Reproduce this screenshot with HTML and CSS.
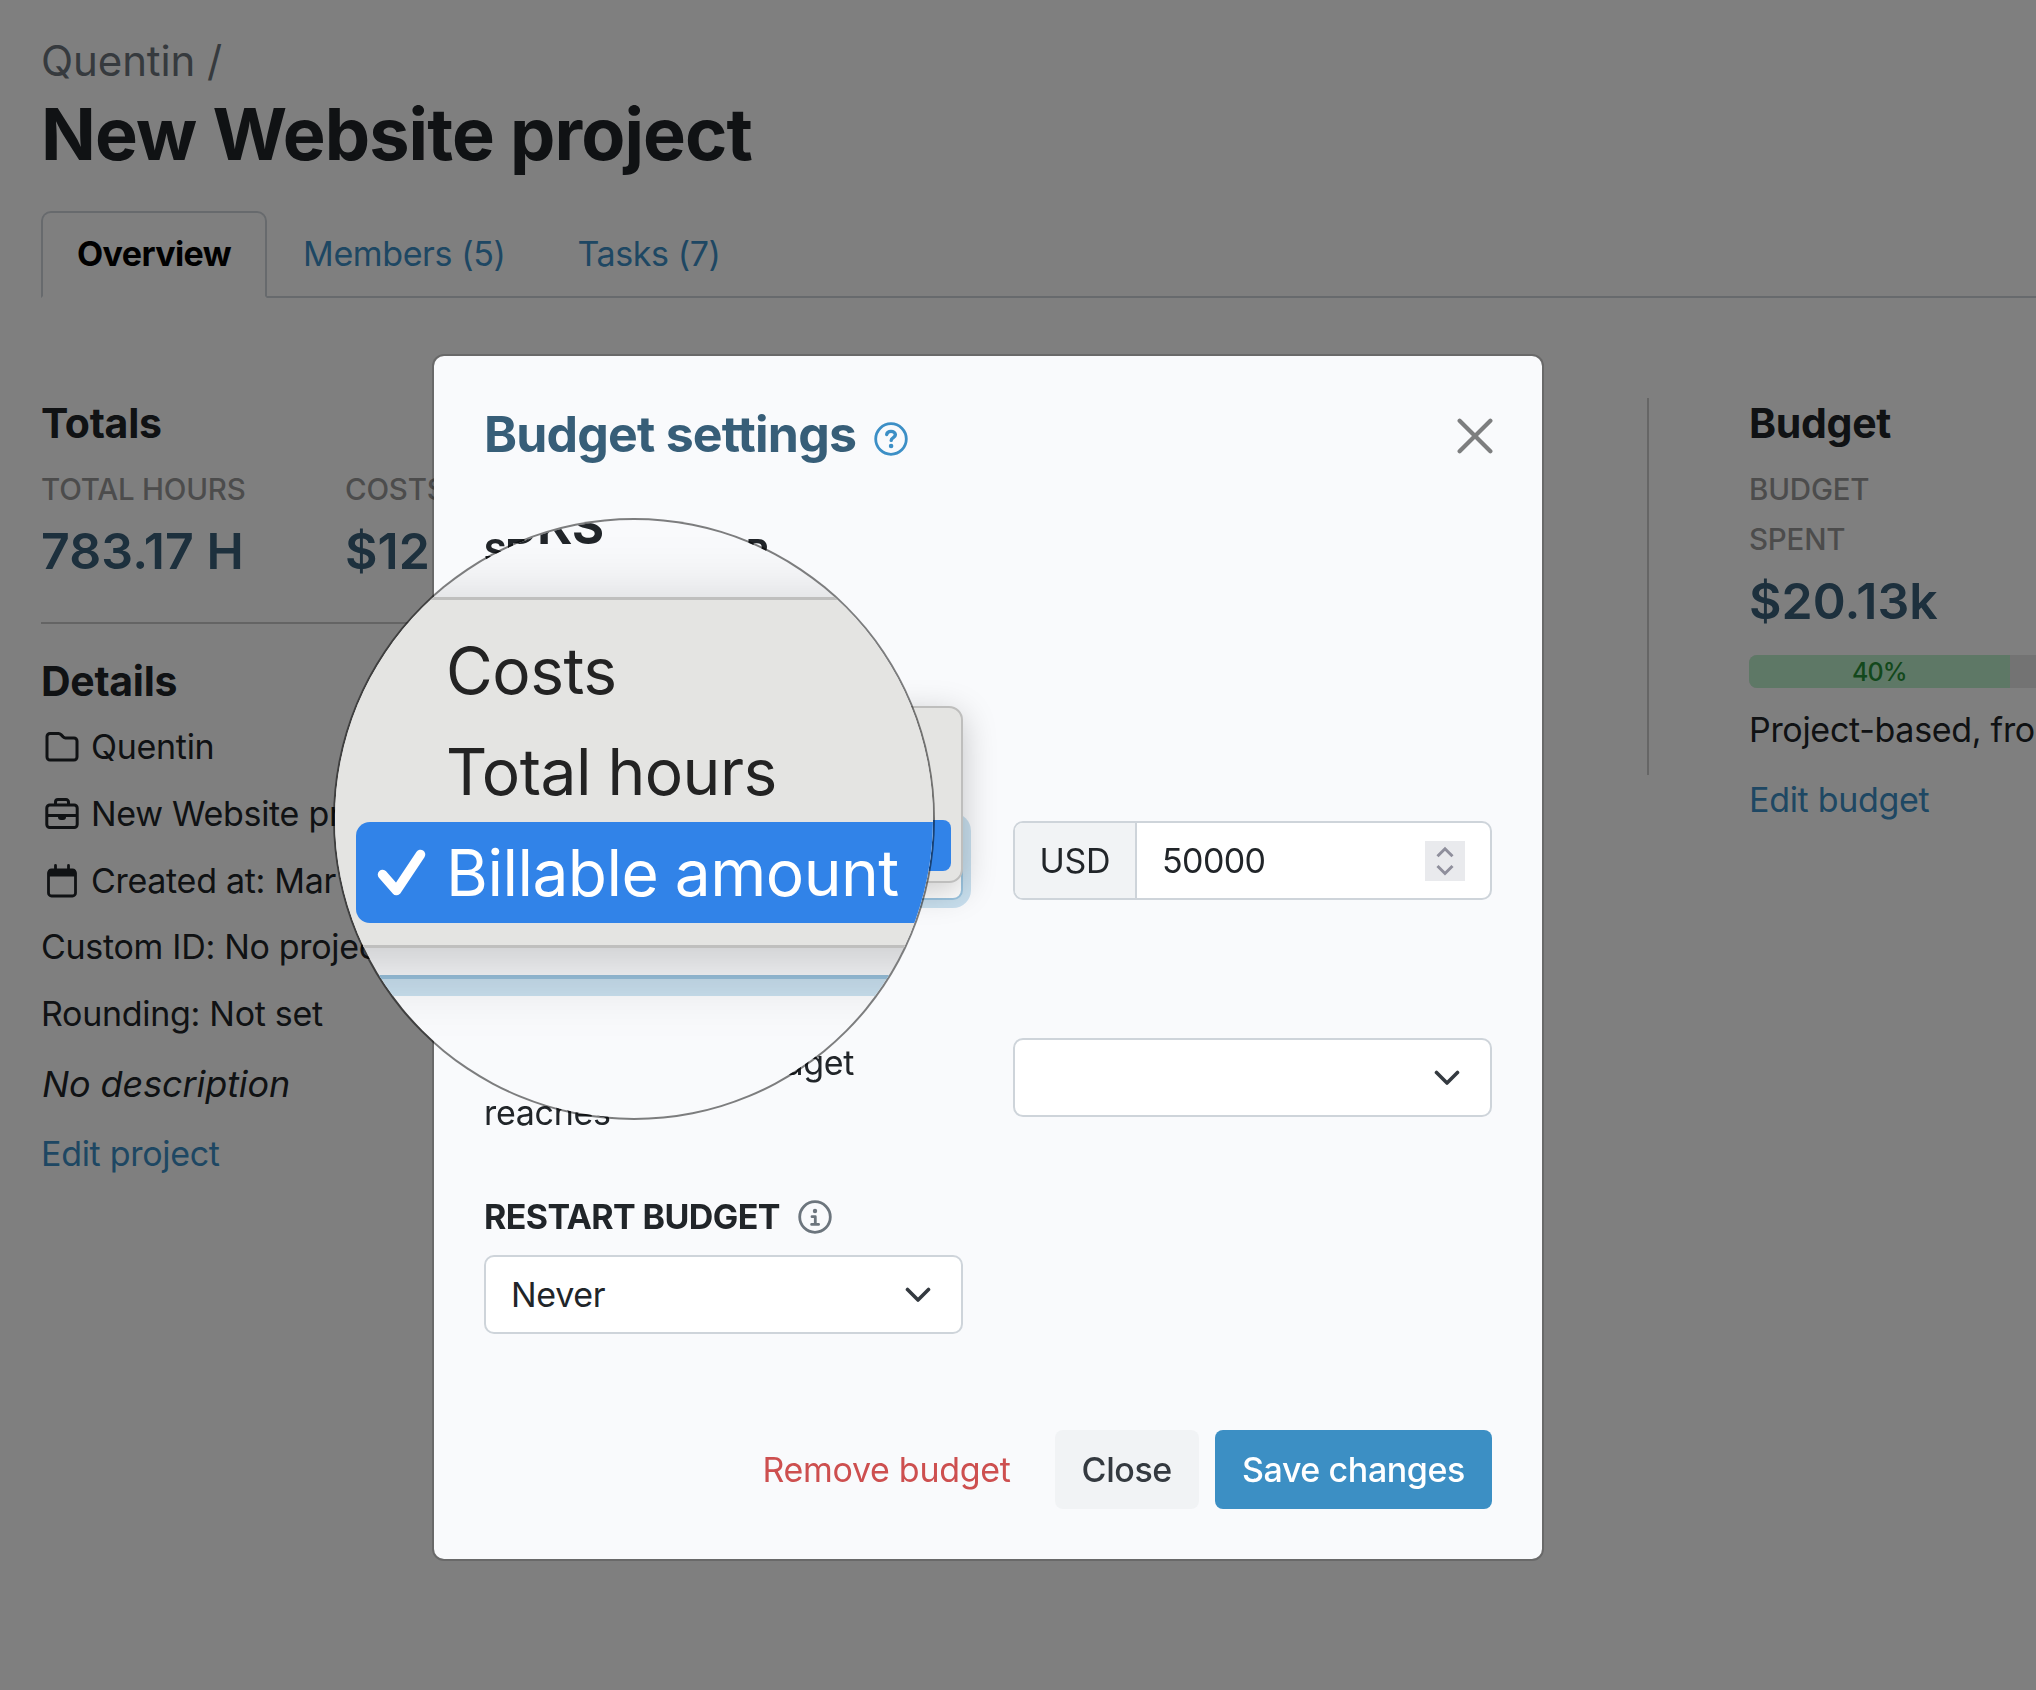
FILE: index.html
```html
<!DOCTYPE html>
<html lang="en">
<head>
  <meta charset="UTF-8" />
  <meta name="viewport" content="width=device-width, initial-scale=1.0" />
  <title>New Website project</title>
  <link rel="stylesheet" href="styles.css">
</head>
<body>
<div class="page">
  <header class="page-header">
    <div class="breadcrumb">Quentin /</div>
    <h1>New Website project</h1>
  </header>

  <nav class="tabs">
    <a class="tab active">Overview</a>
    <a class="tab">Members (5)</a>
    <a class="tab">Tasks (7)</a>
  </nav>

  <main class="summary">
    <section class="project">
      <h2>Totals</h2>
      <div class="totals">
        <div class="total">
          <div class="label">Total hours</div>
          <div class="value">783.17 H</div>
        </div>
        <div class="total">
          <div class="label">Costs</div>
          <div class="value">$12</div>
        </div>
      </div>
      <hr>
      <h2>Details</h2>
      <ul class="details">
        <li>
          <svg class="icon" viewBox="0 0 34 34" fill="none" stroke="currentColor" stroke-width="3" stroke-linejoin="round"><path d="M2 6.500a3 3 0 0 1 3-3h8.500c1 0 1.800.4 2.500 1.100l2.200 2.300c.6.600 1.300 1 2.200 1H29a3 3 0 0 1 3 3V27a3 3 0 0 1-3 3H5a3 3 0 0 1-3-3z"/></svg>
          <span>Quentin</span>
        </li>
        <li>
          <svg class="icon" viewBox="0 0 34 34" fill="none" stroke="currentColor" stroke-width="3"><rect x="1.800" y="8" width="30.400" height="22.500" rx="3"/><path d="M10.500 8V5a2.500 2.500 0 0 1 2.500-2.500h8A2.500 2.500 0 0 1 23.500 5v3M2 18.500h30"/><path d="M13 18h8v2a3 3 0 0 1-3 3h-2a3 3 0 0 1-3-3z" fill="currentColor" stroke="none"/></svg>
          <span>New Website project</span>
        </li>
        <li>
          <svg class="icon" viewBox="0 0 34 34" fill="none" stroke="currentColor" stroke-width="2.800"><rect x="3.500" y="6" width="27" height="26" rx="3"/><path d="M10.500 1.500v6M23.500 1.500v6" stroke-linecap="round"/><path d="M3 12.500V8a3 3 0 0 1 3-3h22a3 3 0 0 1 3 3v4.500z" fill="currentColor" stroke="none"/></svg>
          <span>Created at: Mar 4</span>
        </li>
        <li>Custom ID: No project ID</li>
        <li>Rounding: Not set</li>
        <li class="description">No description</li>
        <li><a>Edit project</a></li>
      </ul>
    </section>

    <section class="chart"></section>

    <section class="budget">
      <h2>Budget</h2>
      <div class="label">Budget</div>
      <div class="label">Spent</div>
      <div class="value">$20.13k</div>
      <div class="progress"><div class="progress-bar" style="width: 40%">40%</div></div>
      <p>Project-based, from Mar 4</p>
      <a>Edit budget</a>
    </section>
  </main>
</div>

<div class="overlay">
  <div class="modal">
    <div class="modal-header">
      <h3>Budget settings</h3>
      <svg class="help" viewBox="0 0 34 34" fill="none" stroke="currentColor" stroke-width="2.800" stroke-linecap="round"><circle cx="17" cy="17" r="15.300"/><path d="M12.700 12.600c.3-2 2-3.200 4.300-3.200 2.500 0 4.400 1.300 4.400 3.400 0 2.900-4.200 2.700-4.200 5.600" stroke-width="3.400"/><circle cx="17.100" cy="24" r="2.300" fill="currentColor" stroke="none"/></svg>
      <svg class="close" viewBox="0 0 34 34" fill="none" stroke="currentColor" stroke-width="4" stroke-linecap="round"><path d="M2.500 2.500l29 29M31.500 2.500l-29 29"/></svg>
    </div>

    <div class="set-for">SET BUDGET FOR</div>

    <div class="row">
      <div class="select focused">
        <div class="menu">
          <div class="option"></div>
          <div class="option"></div>
          <div class="option selected"></div>
        </div>
      </div>
      <div class="input-group">
        <div class="prefix">USD</div>
        <div class="number">
          <span>50000</span>
          <svg class="spinner" viewBox="0 0 40 40" fill="none" stroke="currentColor" stroke-width="3"><path d="M12.500 15.300l7.500-7.500 7.500 7.500M12.500 25l7.500 7.500 7.500-7.500"/></svg>
        </div>
      </div>
    </div>

    <div class="row alert-row">
      <p>Send alert when budget reaches</p>
      <div class="select">
        <svg class="chevron" viewBox="0 0 26 16" fill="none" stroke="currentColor" stroke-width="3.600" stroke-linecap="round" stroke-linejoin="round"><path d="M2.500 2.500L13 13 23.500 2.500"/></svg>
      </div>
    </div>

    <div class="restart">
      <span>RESTART BUDGET</span>
      <svg class="info" viewBox="0 0 34 34" fill="none" stroke="currentColor" stroke-width="2.800" stroke-linecap="round" stroke-linejoin="round"><circle cx="17" cy="17" r="15.300"/><circle cx="17" cy="11" r="2.200" fill="currentColor" stroke="none"/><path d="M14 16.700h3.300v7.500M13.600 24.400h7"/></svg>
    </div>
    <div class="row">
      <div class="select">
        <span>Never</span>
        <svg class="chevron" viewBox="0 0 26 16" fill="none" stroke="currentColor" stroke-width="3.600" stroke-linecap="round" stroke-linejoin="round"><path d="M2.500 2.500L13 13 23.500 2.500"/></svg>
      </div>
    </div>

    <div class="modal-footer">
      <a class="remove">Remove budget</a>
      <button class="btn btn-light">Close</button>
      <button class="btn btn-primary">Save changes</button>
    </div>

    <div class="lens">
      <div class="lens-label">TRACKS</div>
      <div class="lens-menu">
        <div class="lens-option">Costs</div>
        <div class="lens-option">Total hours</div>
        <div class="lens-option selected">
          <svg class="check" viewBox="0 0 50 50" fill="none" stroke="currentColor" stroke-width="9.500" stroke-linecap="round" stroke-linejoin="round"><path d="M5.500 26.500L19.500 42.500 43.500 6.500"/></svg>
          Billable amount
        </div>
      </div>
      <div class="lens-field"></div>
    </div>
  </div>
</div>
</body>
</html>
```
FILE: styles.css
```css
* {
  box-sizing: border-box;
}
html, body {
  margin: 0; padding: 0;
  height: 1690px;
  overflow: hidden;
  font-family: Inter, "Liberation Sans", sans-serif;
  font-size: 34px;
  line-height: 50px;
  letter-spacing: -0.3px;
  background: #fff;
  color: #212529;
}
h1, h2, h3, p, ul {
  margin: 0;
  padding: 0;
}
a {
  color: #3c8fc6;
}
.page {
  padding: 36px 0 0 41px;
  overflow: hidden;
}
.breadcrumb {
  font-size: 42px;
  letter-spacing: -0.1px;
  color: #6c757d;
}
h1 {
  margin-top: 5px;
  font-size: 72px;
  line-height: 86px;
  font-weight: 650;
  letter-spacing: -0.9px;
}
.tabs {
  display: flex;
  height: 87px;
  margin-top: 34px;
  border-bottom: 2px solid #ced4da;
}
.tab {
  height: 87px;
  padding: 16px 34px;
  border: 2px solid transparent;
  border-radius: 10px 10px 0 0;
  letter-spacing: -0.4px;
}
.tab.active {
  color: #000;
  font-weight: 700;
  letter-spacing: -0.6px;
  background: #fff;
  border-color: #ced4da #ced4da #fff;
}
.summary {
  display: flex;
  align-items: flex-start;
  margin-top: 100px;
}
.project {
  flex: none;
  width: 560px;
}
h2 {
  font-size: 41px;
  line-height: 50px;
  font-weight: 650;
}
.totals {
  display: flex;
  margin-top: 16px;
}
.total {
  flex: none;
  width: 304px;
}
.label {
  font-size: 29.5px;
  font-weight: 500;
  letter-spacing: -0.2px;
  text-transform: uppercase;
  color: #999;
}
.value {
  font-size: 50px;
  line-height: 74px;
  font-weight: 600;
  letter-spacing: 0.1px;
  color: #3a607a;
}
hr {
  height: 2px;
  margin: 34px 0 32px;
  border: 0;
  background: #c8c8c8;
}
.details {
  margin-top: 8px;
  list-style: none;
}
.details li {
  display: flex;
  align-items: center;
  gap: 13px;
  height: 66.7px;
  white-space: nowrap;
}
.details .description {
  height: 73px;
  padding-left: 1px;
  font-size: 36px;
  font-style: italic;
  letter-spacing: -0.1px;
}
.icon {
  width: 34px;
  height: 34px;
  margin-left: 4px;
  margin-right: -1px;
}
.chart {
  flex: none;
  width: 1048px;
  height: 377px;
  border-right: 2px solid #ccc;
}
.budget {
  flex: none;
  width: 652px;
  margin-left: 100px;
}
.budget .label:first-of-type {
  margin-top: 16px;
}
.progress {
  height: 33px;
  margin: 17px 0;
  border-radius: 8px;
  overflow: hidden;
  background: #e6e6e6;
}
.progress-bar {
  height: 33px;
  line-height: 34px;
  font-size: 25px;
  font-weight: 500;
  letter-spacing: -0.8px;
  text-align: center;
  background: #bdf0cd;
  color: #269038;
}
.budget p {
  margin-bottom: 20px;
}

.overlay {
  position: fixed;
  top: 0; left: 0; right: 0; bottom: 0;
  display: flex;
  justify-content: center;
  align-items: flex-start;
  padding: 354px 60px 0 0;
  background: rgba(0, 0, 0, 0.5);
}
.modal {
  position: relative;
  display: flex;
  flex-direction: column;
  width: 1112px;
  height: 1207px;
  padding: 48px 50px 50px;
  border: 2px solid rgba(0, 0, 0, 0.175);
  border-radius: 12px;
  background: #f9fafc;
  background-clip: padding-box;
}
.modal-header {
  display: flex;
  align-items: center;
  height: 60px;
}
h3 {
  font-size: 50px;
  line-height: 60px;
  font-weight: 650;
  letter-spacing: -0.8px;
  color: #375e78;
}
.help {
  width: 34px;
  height: 34px;
  margin: 9px 0 0 18px;
  color: #3c8fc6;
}
.close {
  width: 36px;
  height: 36px;
  margin-left: auto;
  margin-right: -1px;
  margin-top: 3px;
  color: #7d7e7f;
}
.set-for {
  margin: 63px 0 244px;
  font-weight: 650;
  letter-spacing: -0.5px;
}
.row {
  display: grid;
  grid-template-columns: 1fr 1fr;
  gap: 50px;
}
.alert-row {
  margin: 138px 0 54px;
  word-spacing: -2.5px;
}
.select, .input-group {
  height: 79px;
  border: 2px solid #ced4da;
  border-radius: 10px;
  background: #fff;
}
.select {
  display: flex;
  align-items: center;
  padding: 0 30px 0 25px;
}
.select.focused {
  position: relative;
  border-color: #9cc5e0;
  box-shadow: 0 0 0 8px #c8dfee;
}
.chevron {
  width: 26px;
  height: 16px;
  margin-left: auto;
  color: #343a40;
}
.menu {
  position: absolute;
  right: -2px;
  bottom: 15px;
  width: 530px;
  height: 177px;
  padding: 10px;
  border: 2px solid #bebebd;
  border-radius: 14px;
  background: #e4e4e2;
  box-shadow: 0 8px 34px rgba(0, 0, 0, 0.22);
}
.option {
  height: 51px;
  border-radius: 8px;
}
.option.selected {
  background: #3183e8;
}
.input-group {
  display: flex;
  overflow: hidden;
}
.prefix {
  width: 122px;
  border-right: 2px solid #ced4da;
  line-height: 75px;
  text-align: center;
  background: #f1f3f5;
}
.number {
  flex: 1;
  display: flex;
  align-items: center;
  justify-content: space-between;
  padding: 0 25px;
  letter-spacing: -0.6px;
}
.spinner {
  width: 40px;
  height: 40px;
  background: #e9eaed;
  color: #8f8f9c;
}
.restart {
  display: flex;
  align-items: center;
  gap: 18px;
  margin-bottom: 13px;
  font-weight: 650;
  letter-spacing: -0.6px;
}
.info {
  width: 34px;
  height: 34px;
  color: #6c757d;
}
.modal-footer {
  display: flex;
  align-items: center;
  justify-content: flex-end;
  gap: 16px;
  margin-top: auto;
}
.remove {
  margin-right: 28px;
  color: #cd4f4f;
}
.btn {
  height: 79px;
  padding: 0 27px;
  border: 0;
  border-radius: 8px;
  font-family: inherit;
  font-size: 34px;
  font-weight: 500;
  letter-spacing: -0.4px;
}
.btn-light {
  background: #f1f3f5;
  color: #343a40;
}
.btn-primary {
  background: #3c8fc4;
  color: #fff;
}

/* magnifier over the open dropdown */
.lens {
  position: absolute;
  top: 162px;
  left: -101px;
  width: 602px;
  height: 602px;
  border: 2px solid rgba(0, 0, 0, 0.5);
  border-radius: 50%;
  overflow: hidden;
  background: #f9fafc;
  background-clip: padding-box;
}
.lens-label {
  width: 269px;
  height: 77px;
  padding-top: 7px;
  font-size: 49px;
  line-height: 0;
  font-weight: 700;
  letter-spacing: 0;
  text-align: right;
}
.lens-menu {
  position: relative;
  z-index: 1;
  height: 351px;
  margin: 0 -60px;
  padding: 20px 0 0 78px;
  border: 3px solid #bfbfbe;
  background: #e4e4e2;
  box-shadow: 0 14px 68px rgba(0, 0, 0, 0.22);
}
.lens-option {
  position: relative;
  height: 101px;
  padding-left: 90px;
  border-radius: 14px;
  font-size: 64px;
  line-height: 101px;
  letter-spacing: -0.5px;
  word-spacing: -1px;
  color: #232323;
}
.lens-option.selected {
  background: #3183e8;
  color: #fff;
}
.check {
  position: absolute;
  left: 21px;
  top: 26px;
  width: 50px;
  height: 50px;
}
.lens-field {
  height: 21px;
  margin-top: 27px;
  border-top: 4px solid #98c1dc;
  background: #c8dfee;
}
```
